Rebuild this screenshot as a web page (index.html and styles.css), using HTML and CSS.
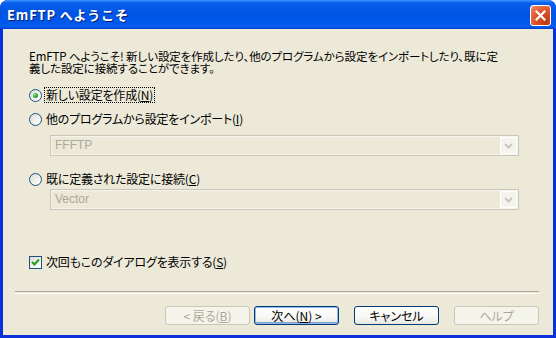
FILE: index.html
```html
<!DOCTYPE html>
<html lang="ja">
<head>
<meta charset="UTF-8"/>
<title>EmFTP へようこそ</title>
<link rel="stylesheet" href="styles.css">
</head>
<body>

<div class="window">
  <!-- TITLE BAR -->
  <div class="titlebar">
    <div class="title-text">EmFTP へようこそ</div>
    <button class="close-btn" aria-label="閉じる">
      <svg width="11" height="11" viewBox="0 0 11 11"><path d="M1.5 1.5 L9.5 9.5 M9.5 1.5 L1.5 9.5" stroke="#fff" stroke-width="2.2" stroke-linecap="square"/></svg>
    </button>
  </div>

  <!-- CLIENT AREA -->
  <div class="client">
    <div class="content">
      <p class="intro">EmFTP へようこそ! 新しい設定を作成したり、他のプログラムから設定をインポートしたり、既に定<br>義した設定に接続することができます。</p>

      <label class="option first">
        <span class="radio checked"></span>
        <span class="label-text focused">新しい設定を作成(<u>N</u>)</span>
      </label>

      <label class="option">
        <span class="radio"></span>
        <span class="label-text">他のプログラムから設定をインポート(<u>I</u>)</span>
      </label>
      <div class="combo disabled first-combo">
        <span class="combo-value">FFFTP</span>
        <span class="combo-arrow"><svg width="9" height="6" viewBox="0 0 9 6"><path d="M1 1 L4.5 4.5 L8 1" fill="none" stroke="#c9c7ba" stroke-width="2"/></svg></span>
      </div>

      <label class="option third">
        <span class="radio"></span>
        <span class="label-text">既に定義された設定に接続(<u>C</u>)</span>
      </label>
      <div class="combo disabled second-combo">
        <span class="combo-value">Vector</span>
        <span class="combo-arrow"><svg width="9" height="6" viewBox="0 0 9 6"><path d="M1 1 L4.5 4.5 L8 1" fill="none" stroke="#c9c7ba" stroke-width="2"/></svg></span>
      </div>

      <label class="option check-row">
        <span class="checkbox"><svg width="9" height="9" viewBox="0 0 9 9"><path d="M1 4 L3.5 6.5 L8 1.5" fill="none" stroke="#21a121" stroke-width="2"/></svg></span>
        <span class="label-text">次回もこのダイアログを表示する(<u>S</u>)</span>
      </label>
    </div>

    <div class="separator"></div>

    <div class="button-row">
      <button class="btn" disabled>&lt; 戻る(<u>B</u>)</button>
      <button class="btn default">次へ(<u>N</u>) &gt;</button>
      <button class="btn cancel">キャンセル</button>
      <button class="btn" disabled>ヘルプ</button>
    </div>
  </div>
</div>

</body>
</html>
```

FILE: styles.css
```css
/* GLOBAL */
html, body {
  margin:0; padding:0; background:#fff;
  font-family:"Noto Sans CJK JP", "Noto Sans", sans-serif;
}
:root {
  --dialog-bg:#ece9d8;
  --frame-blue:#0831d9;
  --btn-border:#003c74;
  --disabled-text:#aca899;
  --disabled-border:#c9c7ba;
}

/* WINDOW FRAME */
.window {
  width:556px; height:338px; box-sizing:border-box;
  display:flex; flex-direction:column;
  background:var(--frame-blue);
  border-radius:8px 8px 0 0; overflow:hidden;
}
.titlebar {
  height:29px; flex:none;
  display:flex; align-items:center; justify-content:space-between;
  padding:0 5px 0 7px;
  background:linear-gradient(180deg,#3d95ff 0%,#0a5fee 10%,#0054e3 45%,#0058ec 80%,#0860f0 90%,#0040d0 100%);
}
.title-text {
  color:#fff; font-size:13px; font-weight:bold; letter-spacing:0.8px;
  text-shadow:1px 1px 0 #0a1e6e;
}
.close-btn {
  width:21px; height:21px; padding:0; margin-top:1px;
  border:1px solid #fff; border-radius:3px;
  background:radial-gradient(circle at 80% 85%,#c23a10 0%,#e0552a 55%,#e87a58 85%,#f3b9a4 100%);
  display:flex; align-items:center; justify-content:center;
}

.client {
  flex:1; display:flex; flex-direction:column;
  margin:0 3px 3px 3px; background:var(--dialog-bg);
  padding:21px 14px 0 12px;
  font-size:12px; color:#000;
}
.content {
  padding:0 20px 0 14px;
  display:flex; flex-direction:column;
}
.intro {
  margin:0; font-size:11.5px; line-height:12px; font-feature-settings:"palt"; letter-spacing:-0.1px;
}

/* RADIOS AND CHECKBOX */
.option {
  display:flex; align-items:center; gap:3px; height:16px;
  font-feature-settings:"palt"; letter-spacing:-0.2px;
}
.option.first {margin-top:13px;}
.option + .option {margin-top:8px;}
.option.third {margin-top:15px;}
.option.check-row {margin-top:44px;}
.label-text {line-height:14px; padding:0 1px;}
.label-text.focused {outline:1px dotted #000; outline-offset:0;}
.radio {
  width:11px; height:11px; border-radius:50%; flex:none;
  border:1px solid #1c5180;
  background:linear-gradient(135deg,#dcdcd7 0%,#f0f0ea 50%,#fff 100%);
  display:flex; align-items:center; justify-content:center;
}
.radio.checked::after {
  content:""; width:5px; height:5px; border-radius:50%;
  background:radial-gradient(circle at 35% 35%,#8ae68a 0%,#21a121 60%,#1a8a1a 100%);
}
.checkbox {
  width:11px; height:11px; flex:none;
  border:1px solid #1c5180;
  background:linear-gradient(135deg,#dcdcd7 0%,#f0f0ea 50%,#fff 100%);
  display:flex; align-items:center; justify-content:center;
}

/* COMBO BOXES */
.combo {
  margin-left:21px; height:19px;
  border:1px solid var(--disabled-border);
  display:flex; align-items:stretch; justify-content:space-between;
  background:var(--dialog-bg);
  box-shadow:inset 0 0 0 1px #f4f3ee;
}
.first-combo {margin-top:8px;}
.second-combo {margin-top:2px;}
.combo-value {
  color:var(--disabled-text); padding-left:4px; line-height:19px;
  font-family:"Liberation Sans", Arial, sans-serif; font-size:12px;
}
.combo-arrow {
  width:15px; margin:1px; border:1px solid #fff;
  background:#f4f3ee;
  display:flex; align-items:center; justify-content:center;
}

/* SEPARATOR */
.separator {
  margin-top:21px; height:1px;
  border-top:1px solid #aca899; border-bottom:1px solid #fff;
}

/* BUTTONS */
.button-row {
  display:flex; justify-content:flex-end; gap:4px; margin-top:12px;
}
.btn {
  width:85px; height:19px; padding:0; box-sizing:border-box;
  font-family:"Noto Sans CJK JP", sans-serif; font-size:12px; line-height:15px;
  border:1px solid var(--btn-border); border-radius:3px;
  background:linear-gradient(180deg,#fff 0%,#f7f7f4 60%,#e8e7e0 100%);
  color:#000;
  font-feature-settings:"palt";
}
.btn.default {box-shadow:inset 0 0 0 1px #97b8ef, inset 0 -1px 0 1px #7da2ce;}
.btn.cancel {margin-left:11px; margin-right:11px;}
.btn:disabled {
  border-color:var(--disabled-border); background:#f5f4ea; color:var(--disabled-text);
}
```
